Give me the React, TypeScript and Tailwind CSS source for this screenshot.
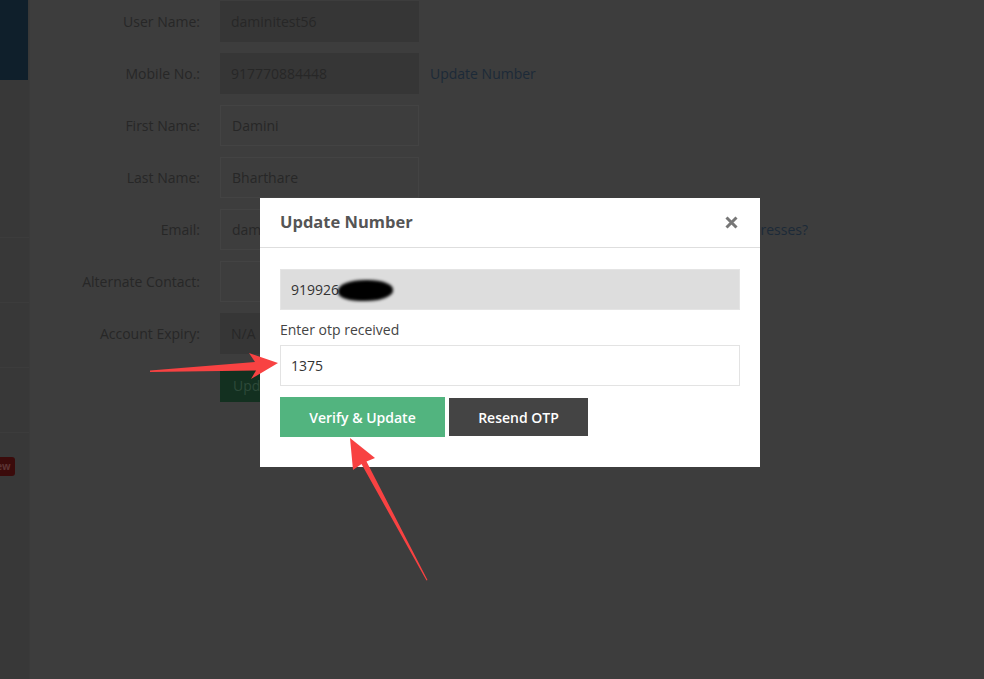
import React from "react";

const rows = [
  { label: "User Name:", value: "daminitest56", readOnly: true },
  { label: "Mobile No.:", value: "917770884448", readOnly: true, link: "Update Number" },
  { label: "First Name:", value: "Damini" },
  { label: "Last Name:", value: "Bharthare" },
  { label: "Email:", value: "damini.bharthare@gmail.com", link: "Want to receive OTP and alerts on other email addresses?", wide: true },
  { label: "Alternate Contact:", value: "" },
  { label: "Account Expiry:", value: "N/A", readOnly: true },
];

function Sidebar() {
  return (
    <div className="w-[30px] shrink-0 bg-[#383838] border-r border-[#3a3a3a] flex flex-col">
      <div className="h-[80px] w-[28px] bg-[#0f1f2b]" />
      <div className="h-[158px] border-b border-[#3c3c3c]" />
      <div className="h-[65px] border-b border-[#3c3c3c]" />
      <div className="h-[65px] border-b border-[#3c3c3c]" />
      <div className="h-[65px] border-b border-[#3c3c3c]" />
      <div className="mt-[24px] flex">
        <span className="-ml-[16px] h-[19px] rounded-[3px] bg-[#3b0b0b] px-[4px] text-[10px] font-bold leading-[19px] text-[#5c3434]">
          New
        </span>
      </div>
    </div>
  );
}

function BackgroundForm() {
  return (
    <div className="flex-1 pt-[1px]">
      <div className="flex flex-col gap-[11px]">
        {rows.map((row) => (
          <div key={row.label} className="flex items-center h-[41px]">
            <div className="w-[190px] shrink-0 pr-[20px] text-right text-[14px] text-[#272727] whitespace-nowrap">{row.label}</div>
            <div
              className={
                "w-[199px] shrink-0 h-[41px] flex items-center px-[11px] text-[14px] text-[#272727] whitespace-nowrap overflow-hidden " +
                (row.readOnly ? "bg-[#363636]" : "border border-[#434343]")
              }
            >
              {row.value}
            </div>
            {row.link && (
              <span
                className={
                  "ml-[11px] shrink-0 text-[14px] text-[#1c2a38] whitespace-nowrap " +
                  (row.wide ? "w-[378px] text-right overflow-hidden" : "")
                }
              >
                {row.link}
              </span>
            )}
          </div>
        ))}
      </div>
      <div className="ml-[190px] mt-[16px] h-[32px] w-[80px] bg-[#133020] px-[13px] text-[14px] leading-[32px] text-[#2e4a3a]">
        Update
      </div>
    </div>
  );
}

function Modal() {
  return (
    <div className="absolute left-[260px] top-[198px] w-[500px] bg-white">
      <div className="h-[50px] flex items-center justify-between px-[20px] border-b border-[#dedede]">
        <h4 className="text-[16.5px] font-bold text-[#555555]">Update Number</h4>
        <svg width="13" height="13" viewBox="0 0 13 13" className="mr-[2px]">
          <path d="M1.5 1.5 L11.5 11.5 M11.5 1.5 L1.5 11.5" stroke="#777777" strokeWidth="3" />
        </svg>
      </div>
      <div className="px-[20px] pt-[21px] pb-[30px]">
        <div className="relative h-[41px] bg-[#dddddd] border border-[#e4e4e4] flex items-center px-[10px] text-[14px] text-[#333333]">
          919926
          <span className="absolute left-[57px] top-[10px] h-[21px] w-[55px] rounded-[50%_45%_50%_40%] bg-black blur-[1.5px]" />
        </div>
        <div className="mt-[10px] text-[14px] leading-[20px] text-[#444444]">Enter otp received</div>
        <div className="mt-[5px] h-[41px] border border-[#e3e3e3] flex items-center px-[10px] text-[14px] text-[#333333]">
          1375
        </div>
        <div className="mt-[11px] flex items-center gap-[4px]">
          <button className="h-[40px] w-[165px] bg-[#52b47f] text-[14px] font-semibold text-white">Verify &amp; Update</button>
          <button className="h-[38px] w-[139px] bg-[#444444] text-[14px] font-semibold text-white">Resend OTP</button>
        </div>
      </div>
    </div>
  );
}

function Arrows() {
  return (
    <svg className="absolute inset-0 pointer-events-none" width="984" height="679" viewBox="0 0 984 679">
      <polygon
        points="150,370.5 255,362 249,353 278,363 251,379 256,370.5 150,372"
        fill="#f84242"
      />
      <polygon
        points="427.5,580 366.5,461.5 375,458 350,438 353,470 361.5,464 426.5,580.5"
        fill="#f84242"
      />
    </svg>
  );
}

export default function App() {
  return (
    <div className="relative w-[984px] h-[679px] overflow-hidden bg-[#3d3d3d] flex font-['Open_Sans',sans-serif]">
      <Sidebar />
      <BackgroundForm />
      <Modal />
      <Arrows />
    </div>
  );
}
